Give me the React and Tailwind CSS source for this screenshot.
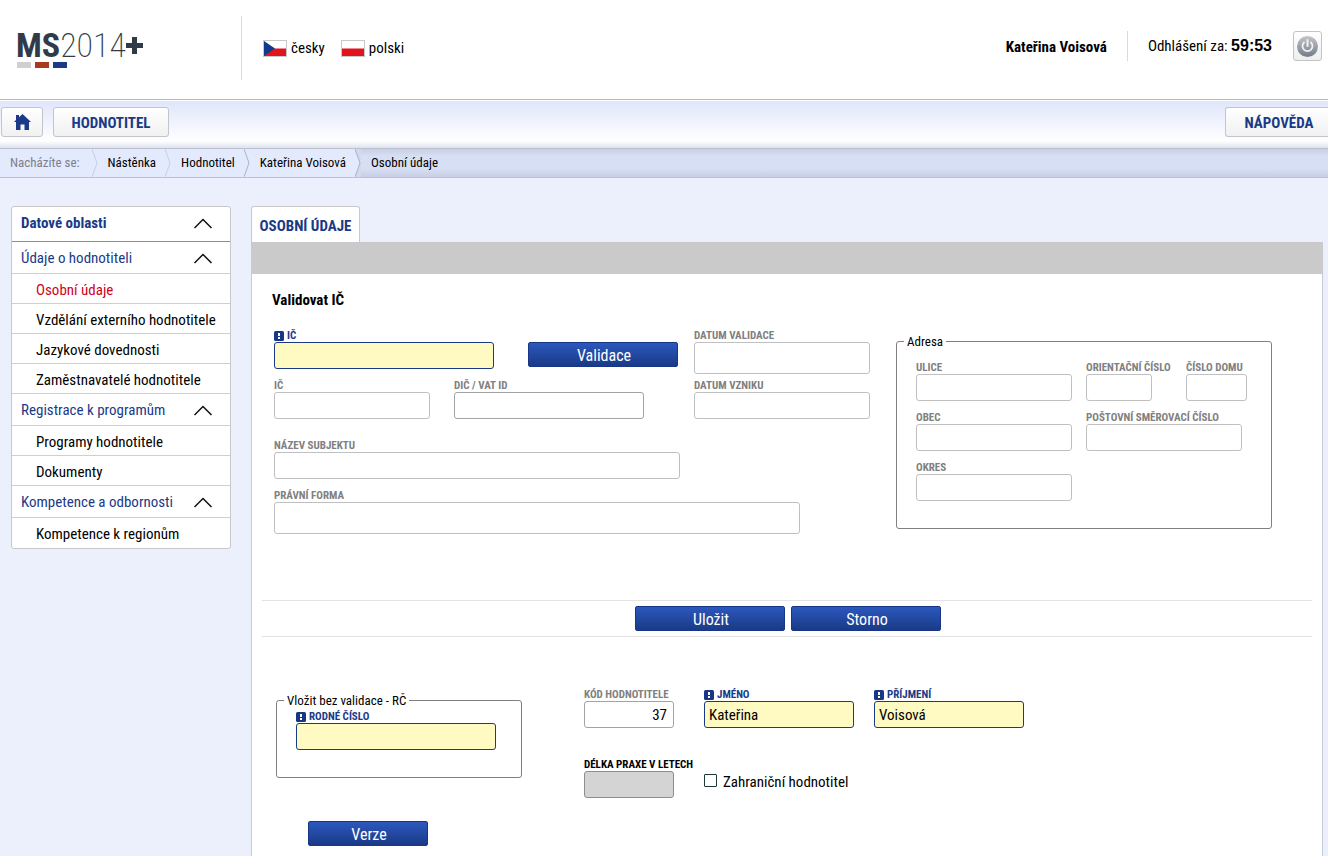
import { useState } from 'react';
import clsx from 'clsx';

const MENU = [
    {
        title: 'Údaje o hodnotiteli',
        items: ['Osobní údaje', 'Vzdělání externího hodnotitele', 'Jazykové dovednosti', 'Zaměstnavatelé hodnotitele'],
    },
    { title: 'Registrace k programům', items: ['Programy hodnotitele', 'Dokumenty'] },
    { title: 'Kompetence a odbornosti', items: ['Kompetence k regionům'] },
];

const ACTIVE_ITEM = 'Osobní údaje';

const CRUMBS = ['Nástěnka', 'Hodnotitel', 'Kateřina Voisová'];

const Logo = () => (
    <a href="#" className="block w-[225px] pl-4" aria-label="MS2014+">
        <span className="flex h-8 items-center pt-0.5 text-[34px] leading-8 text-[#2f3b49]">
            <span className="font-bold">MS</span>
            <span className="font-extralight">2014</span>
            <svg className="h-[17px] w-[17px]" viewBox="0 0 17 17" fill="#2f3b49">
                <path d="M6 0h5v6h6v5h-6v6H6v-6H0V6h6z" />
            </svg>
        </span>
        <span className="mt-0.5 flex gap-1 pl-px">
            <span className="h-1.5 w-3.5 bg-[#d0d0d0]" />
            <span className="h-1.5 w-3.5 bg-[#a93a1f]" />
            <span className="h-1.5 w-3.5 bg-[#1a3a87]" />
        </span>
    </a>
);

const CzechFlag = () => (
    <svg className="h-[17px] w-6" viewBox="0 0 24 17">
        <rect x="0.5" y="0.5" width="23" height="16" fill="#fff" stroke="#c8c8c8" />
        <path d="M1 8.5h22V16H1z" fill="#e0141c" />
        <path d="M1 1l11 7.5L1 16z" fill="#123a8c" />
    </svg>
);

const PolishFlag = () => (
    <svg className="h-[17px] w-6" viewBox="0 0 24 17">
        <rect x="0.5" y="0.5" width="23" height="16" fill="#fff" stroke="#c8c8c8" />
        <path d="M1 8.5h22V16H1z" fill="#e0141c" />
    </svg>
);

const PowerIcon = () => (
    <svg className="h-[21px] w-[21px]" viewBox="0 0 21 21" fill="none">
        <defs>
            <linearGradient id="power" x1="0" y1="0" x2="0" y2="1">
                <stop offset="0" stopColor="#c2c5ca" />
                <stop offset="1" stopColor="#747b87" />
            </linearGradient>
        </defs>
        <circle cx="10.5" cy="10.5" r="10.5" fill="url(#power)" />
        <path d="M7 6.5a5 5 0 1 0 7 0" stroke="#f1f1f1" strokeWidth="1.8" strokeLinecap="round" />
        <path d="M10.5 4v6" stroke="#f1f1f1" strokeWidth="2" strokeLinecap="round" />
    </svg>
);

const HomeIcon = () => (
    <svg className="h-4 w-[17px]" viewBox="0 0 17 16" fill="#1a3a87">
        <path d="M8.5 0L17 8h-2v8h-4.500v-5.500h-4V16H2V8H0l2-1.900V1h3v2.300z" />
    </svg>
);

const ChevronUp = () => (
    <svg className="h-[11px] w-5" viewBox="0 0 20 11" fill="none" stroke="#111" strokeWidth="1.5">
        <path d="M1.500 10L10 1.500L18.500 10" />
    </svg>
);

const CrumbDivider = ({ dark, last }) => (
    <svg className="h-7 w-1.5" viewBox="0 0 6 28" fill="none">
        {last && <path d="M0 0h6v28H0l5-14z" fill="#d3daf0" />}
        <path d="M0 0l5 14L0 28" stroke={dark ? '#a9b2c8' : '#c9cfe2'} />
    </svg>
);

const RequiredMark = () => (
    <svg className="h-2.5 w-2.5" viewBox="0 0 10 10">
        <rect width="10" height="10" rx="1.5" fill="#173685" />
        <path d="M4 2h2v3H4zM4 6h2v2H4z" fill="#fff" />
    </svg>
);

const Header = () => (
    <header className="flex h-[100px] items-start border-b border-[#b9b9b9] bg-white pt-4">
        <div className="flex h-16 items-center border-r border-[#d9d9d9] pr-4">
            <Logo />
        </div>
        <nav className="flex h-16 items-center gap-4 pl-[21px] text-[15px]">
            <a href="#" className="flex items-center gap-1">
                <CzechFlag />
                česky
            </a>
            <a href="#" className="flex items-center gap-1">
                <PolishFlag />
                polski
            </a>
        </nav>
        <div className="mt-[15px] ml-auto flex h-[30px] items-center pr-1.5">
            <span className="flex h-full items-center border-r border-[#d9d9d9] pt-0.5 pr-5 text-[15px] font-bold">
                Kateřina Voisová
            </span>
            <span className="pt-px pl-5 text-[15px]">
                Odhlášení za:{' '}
                <span className="font-['Liberation_Sans',sans-serif] text-base leading-5 font-bold">59:53</span>
            </span>
            <button
                className="ml-[21px] flex h-[30px] w-[29px] items-center justify-center rounded-[3px] border border-[#c3c3c3] bg-linear-to-b from-white to-[#eeeeee]"
                aria-label="Odhlásit"
            >
                <PowerIcon />
            </button>
        </div>
    </header>
);

const TopNav = () => (
    <nav className="flex h-[49px] items-start border-t border-b border-t-white border-b-[#bcc1cc] bg-linear-to-b from-[#dfe6fb] via-white via-85% to-[#dde2f0] pt-1.5 pl-px text-[15px] font-bold text-[#1a3a87]">
        <button
            className="flex h-[30px] w-[42px] items-center justify-center rounded-[3px] border border-[#c3c5cc] bg-linear-to-b from-white to-[#f1f1f1]"
            aria-label="Domů"
        >
            <HomeIcon />
        </button>
        <button className="ml-2.5 h-[30px] w-[116px] rounded-[3px] border border-[#c3c5cc] bg-linear-to-b from-white to-[#f1f1f1] pt-0.5">
            HODNOTITEL
        </button>
        <button className="ml-auto h-[30px] w-[103px] rounded-l-[3px] border border-r-0 border-[#c3c5cc] bg-linear-to-b from-white to-[#f1f1f1] pt-0.5 pl-1">
            NÁPOVĚDA
        </button>
    </nav>
);

const Breadcrumbs = () => (
    <nav className="flex h-[29px] border-b border-[#b9c1d8] bg-linear-to-b from-[#c8cfe4] via-[#d7dff4] via-25% to-[#d7dff4] text-[13px] leading-7">
        <div className="flex bg-[#e4eafd]">
            <span className="pr-3 pl-2.5 text-[#7c7f88]">Nacházíte se:</span>
            <CrumbDivider />
            {CRUMBS.map((crumb, i) => (
                <span key={crumb} className="flex">
                    <a href="#" className="px-2.5 pr-[9px]">
                        {crumb}
                    </a>
                    <CrumbDivider dark={i > 0} last={i === CRUMBS.length - 1} />
                </span>
            ))}
        </div>
        <span className="flex-1 bg-linear-to-b from-transparent from-70% to-[#c8cfe4] pl-2.5">Osobní údaje</span>
    </nav>
);

const Sidebar = () => (
    <aside className="w-[220px] shrink-0 self-start rounded-[3px] border border-[#c8c8c8] bg-white text-[15px]">
        <button className="flex h-[35px] w-full items-center justify-between border-b border-[#8c8c8c] pr-[17px] pb-0.5 pl-[9px] font-bold text-[#1a3a87]">
            Datové oblasti
            <ChevronUp />
        </button>
        {MENU.map((group, g) => (
            <div key={group.title}>
                <button className="flex h-8 w-full items-center justify-between border-b border-[#cfcfcf] pt-px pr-[17px] pl-[9px] text-[#1a3a87]">
                    {group.title}
                    <ChevronUp />
                </button>
                <ul>
                    {group.items.map((item, i) => (
                        <li
                            key={item}
                            className={clsx(
                                'h-[30px] pt-px pl-6 leading-[31px]',
                                !(g === MENU.length - 1 && i === group.items.length - 1) &&
                                    'border-b border-[#cfcfcf]',
                                item === ACTIVE_ITEM && 'text-[#d0021b]'
                            )}
                        >
                            <a href="#">{item}</a>
                        </li>
                    ))}
                </ul>
            </div>
        ))}
    </aside>
);

const Field = ({ id, label, width, variant = 'readonly', tall, value = '', alignRight }) => {
    const [text, setText] = useState(value);

    return (
        <div className={clsx('flex flex-col', width)}>
            <label
                htmlFor={id}
                className={clsx(
                    'flex h-[15px] items-center gap-[3px] pt-0.5 text-[11px] leading-[13px] font-bold whitespace-nowrap uppercase',
                    variant === 'required' && 'text-[#1a3a87]',
                    variant === 'disabled' && 'text-black',
                    (variant === 'readonly' || variant === 'strong') && 'text-[#808080]'
                )}
            >
                {variant === 'required' && <RequiredMark />}
                {label}
            </label>
            <input
                id={id}
                type="text"
                value={text}
                onChange={(e) => setText(e.target.value)}
                readOnly={variant === 'readonly'}
                disabled={variant === 'disabled'}
                className={clsx(
                    'w-full rounded-[3px] border text-[15px]',
                    tall ? 'h-8' : 'h-[27px]',
                    alignRight ? 'pr-1.5 text-right' : 'px-1',
                    variant === 'required' && 'border-[#1a3a87] bg-[#fffac2]',
                    variant === 'disabled' && 'border-[#8e8e8e] bg-[#d4d4d4]',
                    variant === 'strong' && 'border-[#a3a3a3] bg-white',
                    variant === 'readonly' && 'border-[#c0c0c0] bg-white'
                )}
            />
        </div>
    );
};

const ActionButton = ({ children, width = 'w-[150px]' }) => (
    <button
        className={clsx(
            'h-[25px] rounded-[2px] border border-[#173685] bg-linear-to-b from-[#2c58bd] to-[#1a3a87] pt-0.5 pl-0.5 text-base leading-5 text-white',
            width
        )}
    >
        {children}
    </button>
);

const CompanyForm = () => (
    <div className="flex items-start gap-[26px] pl-[22px]">
        <div className="w-[596px] shrink-0">
            <div className="flex h-[50px] items-start">
                <Field id="ic-search" label="IČ" width="w-[220px]" variant="required" />
                <div className="mt-[15px] mr-4 ml-auto">
                    <ActionButton>Validace</ActionButton>
                </div>
                <Field id="validated" label="Datum validace" width="w-44" tall />
            </div>
            <div className="flex h-[60px] items-start gap-6">
                <Field id="ic" label="IČ" width="w-[156px]" />
                <Field id="dic" label="DIČ / VAT ID" width="w-[190px]" variant="strong" />
                <div className="ml-auto">
                    <Field id="founded" label="Datum vzniku" width="w-44" />
                </div>
            </div>
            <div className="flex flex-col gap-2">
                <Field id="subject" label="Název subjektu" width="w-[406px]" />
                <Field id="legal-form" label="Právní forma" width="w-[526px]" tall />
            </div>
        </div>
        <fieldset className="mt-1.5 h-[196px] w-[376px] rounded-[3px] border border-[#808080] pl-[19px]">
            <legend className="-ml-3 px-[3px] pt-px text-[13px] leading-[15px]">Adresa</legend>
            <div className="mt-2.5 flex flex-col gap-2">
                <div className="flex gap-3.5">
                    <Field id="street" label="Ulice" width="w-[156px]" />
                    <div className="flex gap-[34px]">
                        <Field id="orientation" label="Orientační číslo" width="w-[66px]" />
                        <Field id="house" label="Číslo domu" width="w-[61px]" />
                    </div>
                </div>
                <div className="flex gap-3.5">
                    <Field id="city" label="Obec" width="w-[156px]" />
                    <Field id="zip" label="Poštovní směrovací číslo" width="w-[156px]" />
                </div>
                <Field id="district" label="Okres" width="w-[156px]" />
            </div>
        </fieldset>
    </div>
);

const PersonForm = () => (
    <div className="flex items-start gap-[62px] pt-[49px] pl-6">
        <div className="mt-1.5 w-[246px] shrink-0">
            <fieldset className="h-[86px] rounded-[3px] border border-[#808080] pl-[19px]">
                <legend className="-ml-3 px-[3px] pt-px text-[13px] leading-[15px]">Vložit bez validace - RČ</legend>
                <Field id="birth-number" label="Rodné číslo" width="w-[200px]" variant="required" />
            </fieldset>
            <div className="mt-[43px] pl-8">
                <ActionButton width="w-[120px]">Verze</ActionButton>
            </div>
        </div>
        <div className="flex flex-col gap-7">
            <div className="flex">
                <Field id="code" label="Kód hodnotitele" width="mr-[30px] w-[90px]" variant="strong" value="37" alignRight />
                <div className="flex gap-5">
                    <Field id="first-name" label="Jméno" width="w-[150px]" variant="required" value="Kateřina" />
                    <Field id="last-name" label="Příjmení" width="w-[150px]" variant="required" value="Voisová" />
                </div>
            </div>
            <div className="flex gap-[30px]">
                <Field id="practice" label="Délka praxe v letech" width="w-[90px]" variant="disabled" />
                <label className="mt-4 flex h-5 items-start gap-1.5 text-[15px] leading-5">
                    <input
                        type="checkbox"
                        className="mt-0.5 h-[13px] w-[13px] appearance-none rounded-[1px] border border-[#1c3a3a] bg-white checked:bg-[#1a3a87]"
                    />
                    Zahraniční hodnotitel
                </label>
            </div>
        </div>
    </div>
);

const App = () => (
    <div className="min-h-screen bg-[#ecf0fd] font-['Roboto_Condensed','Liberation_Sans_Narrow',Roboto,sans-serif] text-black">
        <Header />
        <TopNav />
        <Breadcrumbs />
        <div className="flex gap-5 pt-7 pr-[5px] pl-[11px]">
            <Sidebar />
            <main className="min-w-0 flex-1">
                <div className="flex h-9 w-[109px] items-center justify-center rounded-t-[3px] border border-b-0 border-[#c8c8c8] bg-white pt-1 text-[15px] font-bold whitespace-nowrap text-[#1a3a87]">
                    OSOBNÍ ÚDAJE
                </div>
                <div className="h-8 bg-[#cacaca]" />
                <div className="min-h-[582px] border-x border-[#c5cbdb] bg-white">
                    <h1 className="px-5 pt-4 text-[15px] leading-5 font-bold">Validovat IČ</h1>
                    <div className="pt-[17px]">
                        <CompanyForm />
                    </div>
                    <div className="mx-2.5 mt-[66px] flex h-[37px] items-center justify-center gap-1.5 border-y border-[#e3e3e3] pl-0.5">
                        <ActionButton>Uložit</ActionButton>
                        <ActionButton>Storno</ActionButton>
                    </div>
                    <PersonForm />
                </div>
            </main>
        </div>
    </div>
);

export default App;
